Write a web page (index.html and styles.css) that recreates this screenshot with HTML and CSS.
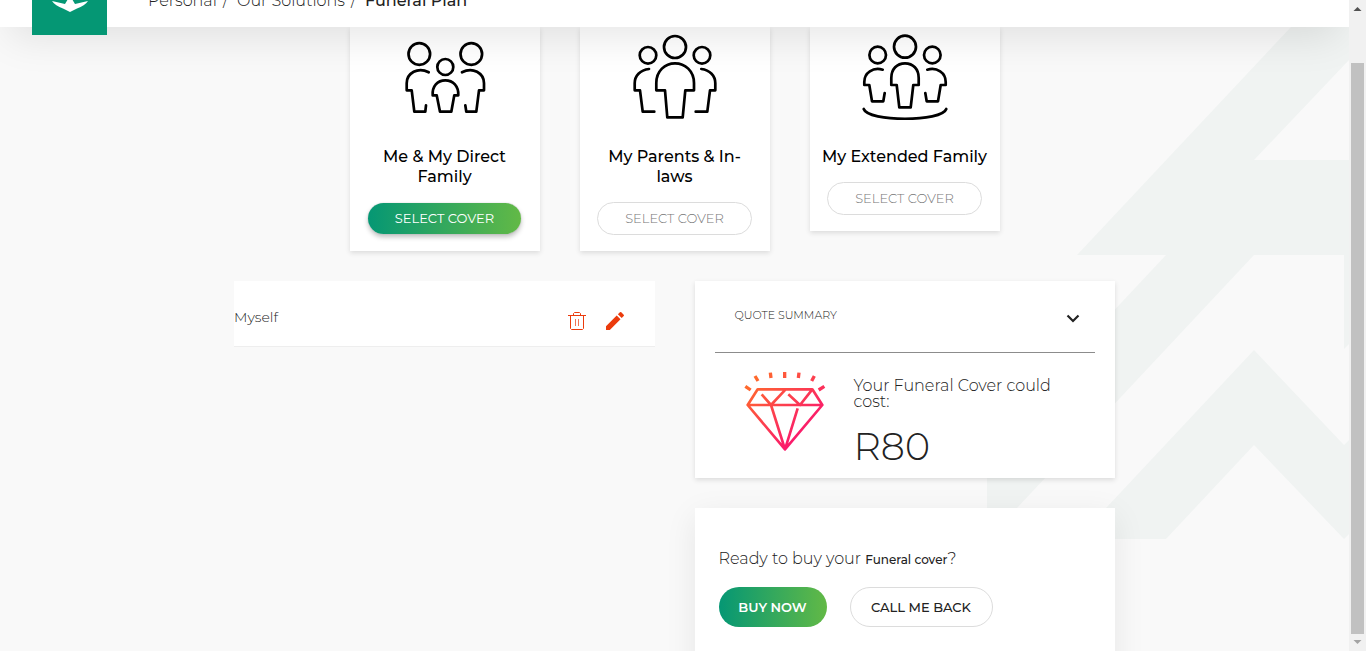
FILE: index.html
```html
<!DOCTYPE html>
<html lang="en">
<head>
<meta charset="utf-8">
<title>Funeral Plan</title>
<link rel="stylesheet" href="styles.css">
</head>
<body>
<div class="page">
  <header class="header">
    <a class="logo" href="#" aria-label="Home">
      <svg viewBox="0 0 75 75" fill="#fff"><path d="M36 20h4v19l3 5 13-3c-2 3-6 6-11 7.500l-7 3.500-7-3.500c-5-1.500-9-4.500-11-7.500l13 3 3-5z"/></svg>
    </a>
    <nav class="crumbs" aria-label="Breadcrumb">
      <a href="#">Personal</a><span class="slash">/</span><a href="#">Our Solutions</a><span class="slash">/</span><span class="current">Funeral Plan</span>
    </nav>
  </header>
  <main class="main">
    <svg class="pattern" viewBox="987 27 362 513" fill="#f0f3f2" aria-hidden="true">
      <path d="M1291 27H1349V60L1254 160H1349V255H1254L1017 508 987 539V446L1166 255H1077Z"/>
      <path d="M1344 255h5v89l-5 5z"/>
      <path d="M1254 350l90 95 5-5v94l-5 5-90-94-88 94h-89z"/>
    </svg>
    <section class="covers">
      <article class="card">
        <svg class="people" viewBox="0 0 90 90">
          <circle cx="19.3" cy="22" r="10.8"/><circle cx="71.3" cy="22" r="10.8"/><circle cx="45.3" cy="35" r="8"/>
          <path d="M28.7 40.3C18 34.500 6.700 41 6.700 51.300V58.300H11.700L14.300 79.700H25.300L26 73.300"/>
          <path d="M62 40.300C72.700 34.500 84 41 84 51.300V58.300H79L76.300 79.700H66.300L65.300 73.300"/>
          <path d="M36.700 63.300H32.700C32 54 37.500 48.300 45.300 48.300S58.700 54 58.300 63.300H54.300L51.300 79.700H40L36.700 63.300"/>
        </svg>
        <h2 class="card-title">Me &amp; My Direct Family</h2>
        <button class="pill pill-select pill-on" type="button">SELECT COVER</button>
      </article>
      <article class="card">
        <svg class="people" viewBox="0 0 90 90">
          <circle cx="18" cy="23.3" r="8.3"/><circle cx="45" cy="15" r="11"/><circle cx="72" cy="23.3" r="8.300"/>
          <path d="M19 37C10 38 4.700 44 4.700 51.300V58.300H10L12.700 79.700H24.300"/>
          <path d="M71.300 37C80 38 85.300 44 85.300 51.300V58.300H80L77.300 79.700H65.700"/>
          <path d="M35 58.300H26.300V51C26.300 39 35 31.300 45 31.300S64 39 64 51V58.300H55.300L52.700 85.300H37.300Z"/>
        </svg>
        <h2 class="card-title">My Parents &amp; In-laws</h2>
        <button class="pill pill-select" type="button">SELECT COVER</button>
      </article>
      <article class="card">
        <svg class="people" viewBox="0 0 90 90">
          <circle cx="17.7" cy="23" r="8.3"/><circle cx="45" cy="14.700" r="11"/><circle cx="72.300" cy="23" r="8.300"/>
          <path d="M22.700 37.700C13 35 4.300 40.500 4.300 50V53H9.300L12 69.300H23.300L24.700 61"/>
          <path d="M67.300 37.700C77 35 85.700 40.500 85.700 50V53H80.700L78 69.300H66.700L65.300 61"/>
          <path d="M36.700 53H31.300V46C31.300 37 37 31.300 45 31.300S58.700 37 58.700 46V53H53.300L50.700 75.300H39.300Z"/>
          <path d="M3.700 77C8 90 82 90 86.300 77"/>
        </svg>
        <h2 class="card-title">My Extended Family</h2>
        <button class="pill pill-select" type="button">SELECT COVER</button>
      </article>
    </section>
    <section class="columns">
      <div class="member">
        <span class="member-name">Myself</span>
        <button class="icon-btn" type="button" aria-label="Delete">
          <svg viewBox="0 0 20 20" fill="none" stroke="#eb3b0c"><path d="M1 4.500h18M6.500 4.500v-2l1-1h5l1 1v2M3.500 4.500v13l1 1h11l1-1v-13"/><path d="M8.500 8v7M11.500 8v7" opacity=".7"/></svg>
        </button>
        <button class="icon-btn" type="button" aria-label="Edit">
          <svg viewBox="0 0 20 20" fill="#eb3b0c"><path d="M1 15.200V19h3.800L15.500 8.300l-3.800-3.800zM18.700 5.100a1 1 0 0 0 0-1.400l-2.400-2.400a1 1 0 0 0-1.400 0l-2 2 3.800 3.800z"/></svg>
        </button>
      </div>
      <div class="side">
        <section class="quote">
          <div class="quote-head">
            <h2 class="quote-title">QUOTE SUMMARY</h2>
            <button class="icon-btn" type="button" aria-label="Toggle summary">
              <svg viewBox="0 0 20 20" fill="none" stroke="#222" stroke-width="2.2"><path d="M4.500 8.500l5.500 5.500L15.500 8.500"/></svg>
            </button>
          </div>
          <div class="quote-body">
            <svg class="diamond" viewBox="0 0 300 285" fill="none" stroke="url(#glow)" stroke-width="8">
              <defs><linearGradient id="glow" gradientUnits="userSpaceOnUse" x1="50" y1="50" x2="200" y2="210"><stop offset="0" stop-color="#ff6a2c"/><stop offset="1" stop-color="#fa1a6c"/></linearGradient></defs>
              <path stroke-linejoin="round" d="M68 73H232L262 120 150 253 38 120ZM38 120H262M80 88L108 120 152 73M160 88L195 120 232 73M108 120L150 253 188 130"/>
              <path stroke-width="10" d="M31 64L47 75M60 33L69 48M106 23L108 39M149 21V39M192 23L190 39M238 33L230 48M268 64L251 75"/>
            </svg>
            <div class="quote-text">
              <p class="quote-label">Your Funeral Cover could cost:</p>
              <p class="price">R80</p>
            </div>
          </div>
        </section>
        <section class="buy">
          <p class="buy-text">Ready to buy your <strong>Funeral cover</strong>?</p>
          <div class="buy-actions">
            <button class="pill pill-buy" type="button">BUY NOW</button>
            <button class="pill pill-call" type="button">CALL ME BACK</button>
          </div>
        </section>
      </div>
    </section>
  </main>
</div>
<div class="scrollbar" aria-hidden="true">
  <svg viewBox="0 0 17 17" fill="#505050"><path d="M8.500 7l4 4h-8z"/></svg>
  <div class="thumb"></div>
  <svg viewBox="0 0 17 17" fill="#a3a3a3"><path d="M8.500 10l4-4h-8z"/></svg>
</div>
</body>
</html>
```
FILE: styles.css
```css
* { box-sizing: border-box; }
body {
  margin: 0;
  height: 100vh;
  display: flex;
  overflow: hidden;
  background: #f9f9f9;
  color: #222;
  font-family: Montserrat, Inter, "Open Sans", sans-serif;
}
h2, p { margin: 0; font-weight: 400; }
button { font-family: inherit; cursor: pointer; }
a { color: inherit; text-decoration: none; }
.page { flex: 1; min-width: 0; overflow: hidden; }

.header {
  position: relative;
  z-index: 2;
  display: flex;
  height: 80px;
  margin-top: -53px;
  padding-left: 32px;
  background: #fff;
  box-shadow: 0 20px 40px -10px rgba(0, 0, 0, .1);
}
.logo { width: 75px; height: 75px; margin-top: 13px; background: #059774; }
.logo svg { display: block; }
.crumbs {
  display: flex;
  align-items: center;
  height: 106px;
  margin-left: 41px;
  font-size: 16px;
  font-weight: 300;
}
.slash { margin: 0 9px 0 6px; }
.current { font-weight: 500; }

.main { position: relative; min-height: 640px; }
.pattern { position: absolute; top: 0; right: 0; width: 362px; height: 513px; }
.covers, .columns { position: relative; margin: 0 auto; }
.covers {
  display: flex;
  justify-content: center;
  align-items: flex-start;
  gap: 40px;
}
.card {
  width: 190px;
  padding: 5px 11px 16px;
  display: flex;
  flex-direction: column;
  align-items: center;
  background: #fff;
  box-shadow: 0 2px 5px rgba(0, 0, 0, .12);
}
.people {
  width: 90px;
  height: 90px;
  margin-bottom: 25px;
  fill: none;
  stroke: #000;
  stroke-width: 2.7;
  stroke-linecap: round;
  stroke-linejoin: round;
}
.card-title {
  margin-bottom: 15px;
  color: #000;
  font-size: 16px;
  font-weight: 500;
  line-height: 20px;
  text-align: center;
}
.pill {
  padding: 0;
  border: 1px solid #dcdcdc;
  border-radius: 20px;
  background: #fff;
}
.pill-select {
  width: 155px;
  height: 33px;
  padding-bottom: 2px;
  color: #777;
  font-size: 13px;
  font-weight: 300;
}
.pill-on {
  width: 153px;
  height: 31px;
  margin: 1px;
  border: 0;
  background: linear-gradient(90deg, #059774, #62b946);
  color: #fff;
  font-weight: 400;
  box-shadow: 0 3px 5px rgba(0, 0, 0, .25), 0 0 1px rgba(0, 0, 0, .3);
}

.columns {
  display: grid;
  grid-template-columns: 1fr 1fr;
  align-items: start;
  gap: 40px;
  max-width: 881px;
  margin-top: 30px;
}
.member {
  display: flex;
  align-items: center;
  gap: 18px;
  height: 66px;
  padding: 14px 30px 0 0;
  background: #fff;
  border-bottom: 1px solid #eee;
}
.member-name { flex: 1; padding-bottom: 8px; font-size: 14px; font-weight: 300; }
.icon-btn { width: 20px; height: 20px; padding: 0; border: 0; background: none; }
.icon-btn svg { display: block; }
.quote { padding: 0 20px; background: #fff; box-shadow: 0 2px 5px rgba(0, 0, 0, .12); }
.quote-head {
  display: flex;
  justify-content: space-between;
  align-items: center;
  height: 72px;
  padding: 0 12px 0 20px;
  border-bottom: 1px solid #8c8c8c;
}
.quote-title { padding-bottom: 4px; font-size: 11px; font-weight: 300; }
.quote-body { display: flex; gap: 19px; height: 125px; padding: 12px 20px 0; }
.diamond { flex: none; width: 100px; height: 95px; }
.quote-text { padding-top: 13px; }
.quote-label { font-size: 16px; font-weight: 300; line-height: 16px; }
.price { padding-top: 17px; font-size: 38px; font-weight: 300; line-height: 40px; }
.buy {
  height: 180px;
  margin-top: 30px;
  padding: 41px 24px;
  background: #fff;
  box-shadow: 0 8px 30px rgba(0, 0, 0, .08);
}
.buy-text { font-size: 16px; font-weight: 300; line-height: 20px; }
.buy-text strong { font-size: 12px; font-weight: 500; }
.buy-actions { display: flex; gap: 23px; margin-top: 17px; }
.pill-buy, .pill-call { height: 40px; font-size: 13px; }
.pill-buy {
  width: 108px;
  border: 0;
  background: linear-gradient(90deg, #059774, #62b946);
  color: #fff;
  font-weight: 600;
}
.pill-call { width: 143px; color: #222; font-weight: 500; }

.scrollbar { display: flex; flex-direction: column; width: 17px; background: #f1f1f1; }
.scrollbar svg { width: 17px; height: 17px; flex: none; }
.thumb { flex: 1; margin: 46px 2px 0; background: #c1c1c1; }
```
